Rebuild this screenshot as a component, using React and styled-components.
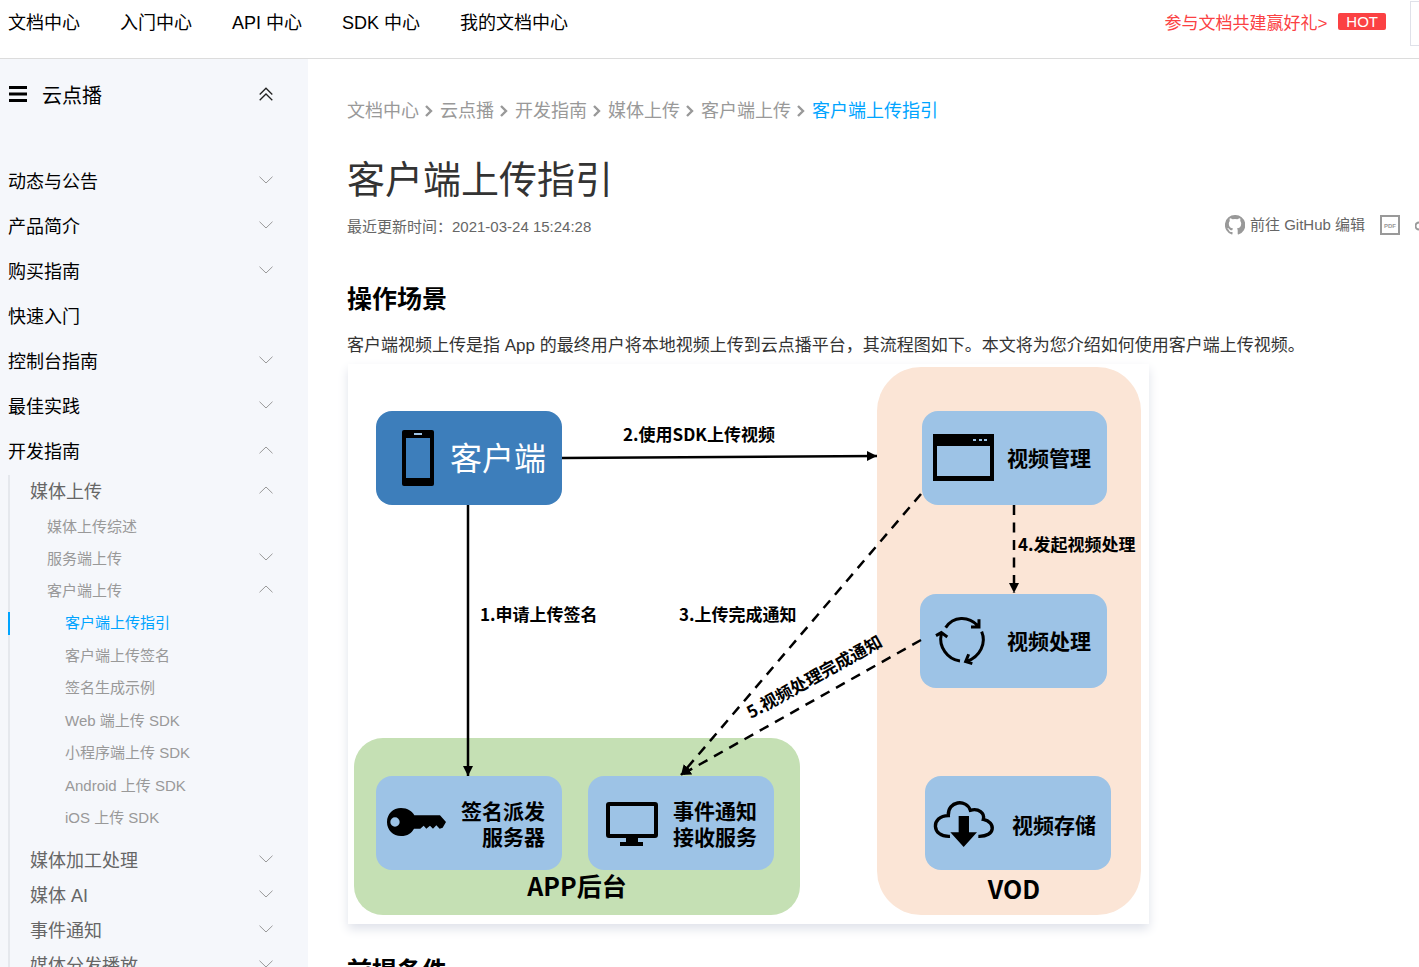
import React from "react";
import styled, { createGlobalStyle, css } from "styled-components";

const sans = `"Liberation Sans", "Noto Sans CJK SC", sans-serif`;
const cjk = `"Noto Sans CJK SC", sans-serif`;

const Global = createGlobalStyle`
  *, *::before, *::after { box-sizing: border-box; }
  body { margin: 0; background: #fff; color: #000; font-family: ${sans}; font-size: 18px; }
  ul { list-style: none; margin: 0; padding: 0; }
  a { color: inherit; text-decoration: none; }
  button, input { font: inherit; color: inherit; }
`;

const Page = styled.div`
  display: flex;
  flex-direction: column;
  height: 100vh;
  overflow: hidden;
`;

const Header = styled.header`
  display: flex;
  flex: none;
  align-items: flex-start;
  height: 59px;
  padding-left: 8px;
  border-bottom: 1px solid #dcdcdc;
  overflow: hidden;
  white-space: nowrap;
`;

const TopNav = styled.nav`
  display: flex;
  gap: 40px;
  line-height: 46px;
`;

const Promo = styled.a`
  display: flex;
  align-items: center;
  gap: 11px;
  height: 42px;
  margin-left: auto;
  color: #fb4143;
  font-size: 17px;
`;

const HotBadge = styled.span`
  padding: 0 8px;
  border-radius: 2px;
  background: #fb4143;
  color: #fff;
  font-size: 15px;
  line-height: 17px;
`;

const SearchBox = styled.input`
  flex: none;
  width: 240px;
  height: 45px;
  margin: 1px -231px 0 24px;
  border: 1px solid #dfe1e9;
  background: #fff;
`;

const Body = styled.div`
  display: flex;
  flex: 1;
  min-height: 0;
`;

const Sidebar = styled.aside`
  flex: none;
  width: 308px;
  padding: 8px 35px 0 8px;
  background: #f5f7fb;
  overflow-y: auto;
  scrollbar-width: none;
`;

const SidebarHead = styled.div`
  display: flex;
  align-items: center;
  height: 54px;
  margin-bottom: 36px;
  font-size: 20px;
`;

const ProductName = styled.span`
  flex: 1;
  margin-left: 15px;
`;

const IconButton = styled.button`
  display: flex;
  padding: 0;
  border: 0;
  background: none;
`;

const levels = {
  1: css`height: 45px; font-size: 18px; color: #000;`,
  2: css`height: 29px; padding-left: 20px; font-size: 18px; color: #666;`,
  3: css`height: 32px; padding-left: 37px; font-size: 15px; color: #999;`,
  4: css`height: 32px; padding-left: 55px; font-size: 15px; color: #999;`,
};

const Row = styled.a`
  position: relative;
  display: flex;
  align-items: center;
  justify-content: space-between;
  width: 100%;
  padding: 0;
  border: 0;
  background: none;
  text-align: left;
  white-space: nowrap;
  ${(p) => levels[p.$level]}
  ${(p) =>
    p.$active &&
    css`
      color: #00a4ff;
      &::before {
        content: "";
        position: absolute;
        left: -2px;
        top: 7px;
        width: 2px;
        height: 23px;
        background: #00a4ff;
      }
    `}
`;

const lists = {
  1: css``,
  2: css`display: flex; flex-direction: column; gap: 6px; margin-top: 3px; border-left: 2px solid #e5e8ed;`,
  3: css`margin: 5px 0 6px;`,
  4: css`li:nth-child(even) { padding-top: 1px; }`,
};

const List = styled.ul`
  ${(p) => lists[p.$level]}
`;

const Main = styled.main`
  flex: 1;
  min-width: 0;
  padding: 37px 0 0 39px;
  overflow: hidden auto;
  scrollbar-width: none;
`;

const Breadcrumb = styled.nav`
  display: flex;
  align-items: center;
  gap: 6px;
  line-height: 30px;
  color: #999;
  white-space: nowrap;
`;

const Crumb = styled.a`
  color: ${(p) => (p.$current ? "#00a4ff" : "#999")};
`;

const Title = styled.h1`
  margin: 24px 0 0;
  font-size: 38px;
  font-weight: 400;
  line-height: 60px;
  color: #333;
`;

const Meta = styled.div`
  display: flex;
  align-items: center;
  justify-content: space-between;
  height: 30px;
  font-size: 15px;
  color: #666;
  white-space: nowrap;
`;

const Tools = styled.div`
  display: flex;
  align-items: center;
  gap: 15px;
  margin-right: -16px;
`;

const ToolLink = styled.a`
  display: flex;
  align-items: center;
  gap: 5px;
  line-height: 20px;
  svg { flex: none; color: #999; }
`;

const SectionTitle = styled.h2`
  margin: 38px 0 8px;
  font-size: 25px;
  font-weight: 700;
  line-height: 42px;
`;

const Paragraph = styled.p`
  margin: 0;
  font-size: 17px;
  line-height: 36px;
  color: #333;
`;

const Figure = styled.figure`
  width: 801px;
  max-width: 100%;
  margin: 0 0 -12px 1px;
  background: #fff;
  box-shadow: 0 5px 10px #dfe2ea;
  svg { display: block; width: 100%; height: auto; }
`;

const NodeText = styled.text`
  font-family: ${cjk};
  font-weight: ${(p) => (p.$light ? 400 : 700)};
  font-size: ${(p) => p.$size}px;
  fill: ${(p) => (p.$light ? "#fff" : "#000")};
`;

const Chevron = ({ up }) => (
  <svg width="14" height="8" viewBox="0 0 14 8" fill="none" stroke="#999" aria-hidden="true">
    <path d={up ? "M.5 7.3 7 1l6.500 6.300" : "M.5.7 7 7 13.500.7"} />
  </svg>
);

const CrumbArrow = () => (
  <svg width="9" height="12" viewBox="0 0 9 12" fill="none" stroke="#999" strokeWidth="2.400" aria-hidden="true">
    <path d="M1 1l5 5-5 5" />
  </svg>
);

const MenuIcon = () => (
  <svg width="19" height="16" viewBox="0 0 19 16" aria-hidden="true">
    <path d="M1 0h18v3H1zM1 6.500h18v3H1zM1 13h18v3H1z" />
  </svg>
);

const CollapseIcon = () => (
  <svg width="14" height="14" viewBox="0 0 14 14" fill="none" stroke="#222" strokeWidth="1.300" aria-hidden="true">
    <path d="M.7 7.500 7 1.200l6.300 6.300M.7 13.300 7 7l6.300 6.300" />
  </svg>
);

const GithubIcon = () => (
  <svg width="20" height="20" viewBox="0 0 20 20" fill="#999" aria-hidden="true">
    <path d="M10 0a10 10 0 0 0-3.200 19.500c.5.1.7-.2.700-.5v-2.100c-2.200.4-3.200-.6-3.600-1.700-.2-.5-.6-1-1-1.300-.4-.2-.8-.7 0-.7.800 0 1.400.7 1.600 1 .9 1.500 2.300 1.100 2.900.8.1-.6.3-1.100.7-1.400-2.500-.3-4.300-1.600-4.300-4.800 0-1.300.4-2.200 1-2.900-.2-.5-.3-1.500.1-2.700 0 0 .9-.2 2.700 1a9.200 9.200 0 0 1 4.800 0c1.800-1.200 2.700-1 2.700-1 .4 1.200.3 2.200.1 2.700.6.700 1 1.600 1 2.900 0 3.200-1.900 4.500-4.300 4.800.5.400.8 1.100.8 2V19c0 .3.200.6.700.5A10 10 0 0 0 10 0z" />
  </svg>
);

const PdfIcon = () => (
  <svg width="20" height="20" viewBox="0 0 20 20" aria-hidden="true">
    <rect x="1" y="1" width="18" height="18" fill="none" stroke="#999" strokeWidth="2" />
    <text x="10" y="13" textAnchor="middle" fontFamily="Liberation Sans, sans-serif" fontSize="6" fontWeight="700" fill="#999">PDF</text>
  </svg>
);

const ShareIcon = () => (
  <svg width="20" height="20" viewBox="0 0 20 20" fill="none" stroke="#999" strokeWidth="2" aria-hidden="true">
    <circle cx="4" cy="11" r="3.500" />
    <circle cx="15" cy="4" r="3" />
    <circle cx="15" cy="17" r="2" />
    <path d="M8 9l5-3M8 13l5 3" />
  </svg>
);

const menu = [
  { label: "动态与公告", open: false },
  { label: "产品简介", open: false },
  { label: "购买指南", open: false },
  { label: "快速入门" },
  { label: "控制台指南", open: false },
  { label: "最佳实践", open: false },
  {
    label: "开发指南",
    open: true,
    items: [
      {
        label: "媒体上传",
        open: true,
        items: [
          { label: "媒体上传综述" },
          { label: "服务端上传", open: false },
          {
            label: "客户端上传",
            open: true,
            items: [
              { label: "客户端上传指引", active: true },
              { label: "客户端上传签名" },
              { label: "签名生成示例" },
              { label: "Web 端上传 SDK" },
              { label: "小程序端上传 SDK" },
              { label: "Android 上传 SDK" },
              { label: "iOS 上传 SDK" },
            ],
          },
        ],
      },
      { label: "媒体加工处理", open: false },
      { label: "媒体 AI", open: false },
      { label: "事件通知", open: false },
      { label: "媒体分发播放", open: false },
    ],
  },
];

function Menu({ items, level }) {
  return (
    <List $level={level}>
      {items.map((item) => {
        const expandable = item.open !== undefined;
        const props = expandable
          ? { as: "button", type: "button", "aria-expanded": item.open }
          : { href: "#" };
        return (
          <li key={item.label}>
            <Row $level={level} $active={item.active} {...props}>
              {item.label}
              {expandable && <Chevron up={item.open} />}
            </Row>
            {item.items && <Menu items={item.items} level={level + 1} />}
          </li>
        );
      })}
    </List>
  );
}

const Node = ({ x, y, w = 186, fill = "#9dc3e6" }) => (
  <rect x={x} y={y} width={w} height="94" rx="16" fill={fill} />
);

function UploadDiagram() {
  return (
    <svg viewBox="0 0 801 560" role="img" aria-label="客户端上传流程图">
      <defs>
        <marker id="arrow" markerUnits="userSpaceOnUse" markerWidth="12" markerHeight="12" refX="10" refY="5" orient="auto">
          <path d="M0 0l10 5-10 5z" />
        </marker>
      </defs>
      <rect x="529" y="3" width="264" height="548" rx="44" fill="#fbe5d6" />
      <rect x="6" y="374" width="446" height="177" rx="29" fill="#c5e0b4" />

      <Node x={28} y={47} fill="#3d7ebb" />
      <Node x={574} y={47} w={185} />
      <Node x={572} y={230} w={187} />
      <Node x={577} y={412} />
      <Node x={28} y={412} />
      <Node x={240} y={412} />

      <g fill="none" stroke="#000" strokeWidth="2.500">
        <path d="M214 94 529 92" markerEnd="url(#arrow)" />
        <path d="M120 141V412" markerEnd="url(#arrow)" />
        <path d="M666 141V229" strokeDasharray="10 7.500" markerEnd="url(#arrow)" />
        <path d="M573 130 333 411" strokeDasharray="10 7.500" markerEnd="url(#arrow)" />
        <path d="M573 276 333 411" strokeDasharray="10 7.500" markerEnd="url(#arrow)" />
      </g>

      {/* phone */}
      <rect x="54" y="66" width="32" height="56" rx="2" />
      <rect x="58" y="74" width="24" height="40" fill="#3d7ebb" />
      <rect x="66" y="69" width="8" height="2" fill="#9dc3e6" />

      {/* browser window */}
      <path fillRule="evenodd" d="M585 70h61v47h-61zM589 82v30h53v-30z" />
      <path fill="#9dc3e6" d="M625 75h3v2h-3zM631 75h3v2h-3zM636 75h3v2h-3z" />

      {/* processing cycle */}
      <g transform="translate(512 -4) scale(.3333)" fill="none" stroke="#000" strokeWidth="9">
        <path d="M257 803C280 768 325 767 353 797M357 778V801H333" />
        <path d="M365 815C380 850 360 890 321 904M326 883L317 905 337 911" />
        <path d="M300 903C262 898 235 860 244 822M228 827L244 818 262 831" />
      </g>

      {/* key */}
      <g transform="translate(-8 356) scale(.3333)">
        <path fillRule="evenodd" d="M183 264c20 0 34 10 40 22h77l18 20-10 17-9 3-10-10-10 10-9-9-11 9-8-9-10 9h-19c-7 13-19 22-39 22-24 0-42-18-42-42s18-42 42-42zM165 292a14 14 0 1 0 0 28 14 14 0 0 0 0-28z" />
      </g>

      {/* monitor */}
      <rect x="260" y="440" width="48" height="32" rx="1" fill="none" stroke="#000" strokeWidth="4" />
      <path d="M278 473h12v5h5v4h-23v-4h6z" />

      {/* cloud download */}
      <g transform="translate(512 356) scale(.3333)">
        <path fill="none" stroke="#000" strokeWidth="10" d="M270 349C213 352 212 287 265 287 262 242 320 236 331 271 356 264 375 279 370 298 408 305 408 351 355 349" />
        <path d="M296 288h31v49h24l-40 44-40-44h25z" />
      </g>

      <NodeText $size={32} $light x="102" y="106">客户端</NodeText>
      <NodeText $size={21} x="659" y="102">视频管理</NodeText>
      <NodeText $size={21} x="659" y="285">视频处理</NodeText>
      <NodeText $size={21} x="664" y="469">视频存储</NodeText>
      <NodeText $size={21} x="197" y="455" textAnchor="end">签名派发</NodeText>
      <NodeText $size={21} x="197" y="481" textAnchor="end">服务器</NodeText>
      <NodeText $size={21} x="325" y="455">事件通知</NodeText>
      <NodeText $size={21} x="325" y="481">接收服务</NodeText>
      <NodeText $size={25} x="229" y="532" textAnchor="middle">APP后台</NodeText>
      <NodeText $size={25} x="666" y="535" textAnchor="middle">VOD</NodeText>

      <NodeText $size={17} x="132" y="257">1.申请上传签名</NodeText>
      <NodeText $size={17} x="275" y="77">2.使用SDK上传视频</NodeText>
      <NodeText $size={17} x="331" y="257">3.上传完成通知</NodeText>
      <NodeText $size={17} x="670" y="187">4.发起视频处理</NodeText>
      <NodeText $size={17} transform="translate(403 355) rotate(-29)">5.视频处理完成通知</NodeText>
    </svg>
  );
}

const topLinks = ["文档中心", "入门中心", "API 中心", "SDK 中心", "我的文档中心"];
const crumbs = ["文档中心", "云点播", "开发指南", "媒体上传", "客户端上传", "客户端上传指引"];

export default function App() {
  return (
    <Page>
      <Global />
      <Header>
        <TopNav>
          {topLinks.map((t) => (
            <a href="#" key={t}>{t}</a>
          ))}
        </TopNav>
        <Promo href="#">
          参与文档共建赢好礼&gt;<HotBadge>HOT</HotBadge>
        </Promo>
        <SearchBox type="search" aria-label="搜索" />
      </Header>
      <Body>
        <Sidebar>
          <SidebarHead>
            <IconButton type="button" aria-label="菜单"><MenuIcon /></IconButton>
            <ProductName>云点播</ProductName>
            <IconButton type="button" aria-label="收起"><CollapseIcon /></IconButton>
          </SidebarHead>
          <Menu items={menu} level={1} />
        </Sidebar>
        <Main>
          <Breadcrumb>
            {crumbs.map((c, i) => (
              <React.Fragment key={c}>
                {i > 0 && <CrumbArrow />}
                <Crumb href="#" $current={i === crumbs.length - 1}>{c}</Crumb>
              </React.Fragment>
            ))}
          </Breadcrumb>
          <Title>客户端上传指引</Title>
          <Meta>
            <span>最近更新时间：2021-03-24 15:24:28</span>
            <Tools>
              <ToolLink href="#"><GithubIcon />前往 GitHub 编辑</ToolLink>
              <ToolLink href="#" aria-label="PDF"><PdfIcon /></ToolLink>
              <ToolLink href="#" aria-label="分享"><ShareIcon /></ToolLink>
            </Tools>
          </Meta>
          <SectionTitle>操作场景</SectionTitle>
          <Paragraph>
            客户端视频上传是指 App 的最终用户将本地视频上传到云点播平台，其流程图如下。本文将为您介绍如何使用客户端上传视频。
          </Paragraph>
          <Figure><UploadDiagram /></Figure>
          <SectionTitle>前提条件</SectionTitle>
        </Main>
      </Body>
    </Page>
  );
}
